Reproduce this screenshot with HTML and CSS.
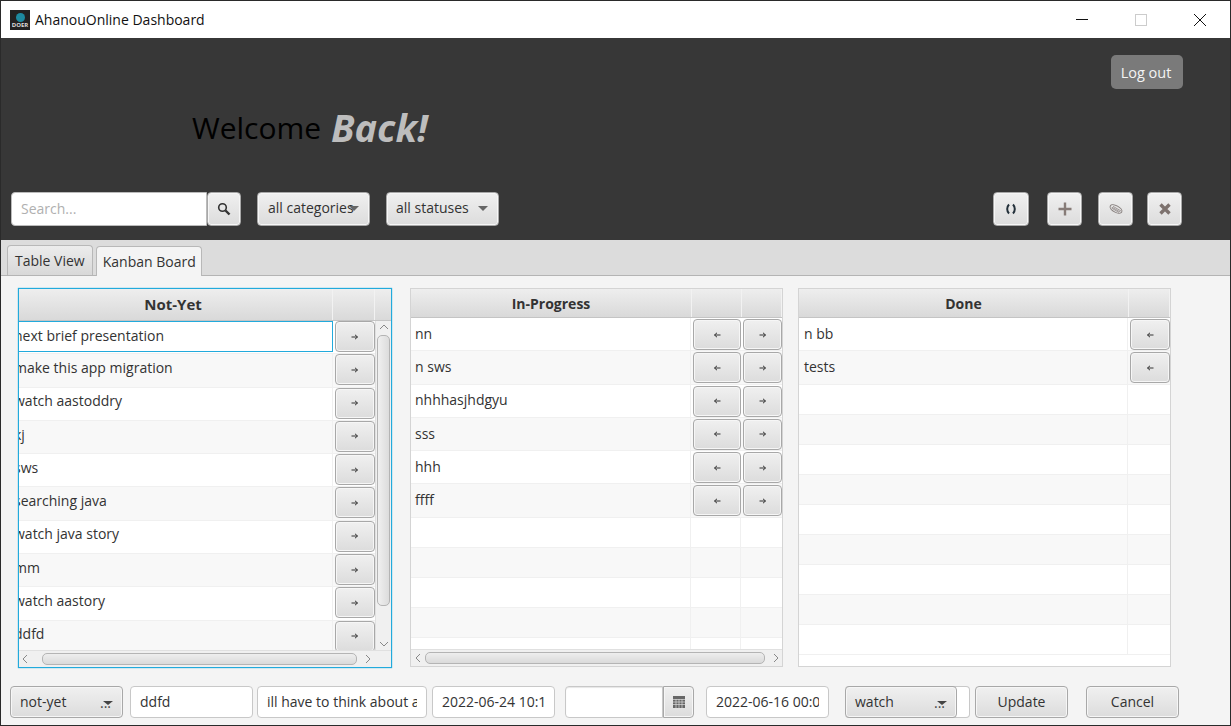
FILE: index.html
```html
<!DOCTYPE html>
<html lang="en">
  <head>
    <meta charset="UTF-8" />
    <meta name="viewport" content="width=device-width, initial-scale=1.0" />
    <title>AhanouOnline Dashboard</title>
    <link rel="stylesheet" href="styles.css">
  </head>
  <body>
    <svg class="defs" width="0" height="0">
      <symbol id="arrow-right" viewBox="0 0 8 8"><path d="M0.500 4h6M4 1.800l2.500 2.200L4 6.200" fill="none" stroke="#333" stroke-width="1"/></symbol>
      <symbol id="arrow-left" viewBox="0 0 8 8"><path d="M7.500 4h-6M4 1.800L1.500 4 4 6.200" fill="none" stroke="#333" stroke-width="1"/></symbol>
    </svg>

    <div class="window">
      <div class="titlebar">
        <div class="app-icon"><span class="app-globe"></span><span class="app-name">DOER</span></div>
        <span class="app-title">AhanouOnline Dashboard</span>
        <div class="window-controls">
          <svg width="12" height="12" viewBox="0 0 12 12"><path d="M0 5.500h12" stroke="#111" stroke-width="1"/></svg>
          <svg width="12" height="12" viewBox="0 0 12 12"><rect x=".5" y=".5" width="11" height="11" fill="none" stroke="#ccc"/></svg>
          <svg width="12" height="12" viewBox="0 0 12 12"><path d="M0 0l12 12M12 0L0 12" stroke="#111" stroke-width="1"/></svg>
        </div>
      </div>

      <header class="header">
        <div class="header-top"><button class="logout">Log out</button></div>
        <h1 class="welcome">Welcome <em>Back!</em></h1>
        <div class="toolbar">
          <div class="search">
            <input class="search-input" placeholder="Search..." />
            <button class="btn search-btn">
              <svg width="14" height="14" viewBox="0 0 14 14"><circle cx="5.500" cy="5.500" r="3.800" fill="none" stroke="#333" stroke-width="1.600"/><path d="M8.500 8.500l4 4" stroke="#333" stroke-width="2.400"/></svg>
            </button>
          </div>
          <div class="btn combo combo-cat">all categories<span class="caret"></span></div>
          <div class="btn combo combo-status">all statuses<span class="caret"></span></div>
          <div class="tools">
            <button class="btn tool tool-refresh">
              <svg width="12" height="12" viewBox="0 0 12 12"><path d="M4 1.500C1.600 4 1.600 8 4 10.500M8 1.500C10.400 4 10.400 8 8 10.500" fill="none" stroke="#23303a" stroke-width="2"/></svg>
            </button>
            <button class="btn tool tool-add">
              <svg width="14" height="14" viewBox="0 0 14 14"><path d="M7 .5v13M.5 7h13" stroke="#877c78" stroke-width="2.400"/></svg>
            </button>
            <button class="btn tool tool-edit">
              <svg width="14" height="12" viewBox="0 0 14 12"><ellipse cx="7" cy="6" rx="6.500" ry="3.200" transform="rotate(28 7 6)" fill="#e4e4e4" stroke="#857d7b" stroke-width="1"/><path d="M2.500 5l7.500 4.500M4 3.300l8 4.700M3 4.200l8 4.700" stroke="#8f8785" stroke-width=".8"/></svg>
            </button>
            <button class="btn tool tool-del">
              <svg width="12" height="12" viewBox="0 0 12 12"><path d="M1.500 1.500l9 9M10.500 1.500l-9 9" stroke="#7d726e" stroke-width="3.400"/></svg>
            </button>
          </div>
        </div>
      </header>

      <div class="tabbar">
        <div class="tab">Table View</div>
        <div class="tab tab-active">Kanban Board</div>
      </div>

      <main class="content">
        <div class="boards">
          <section class="board board-notyet">
            <div class="board-head">
              <div class="head-cell head-name">Not-Yet</div>
              <div class="head-cell head-action"></div>
              <div class="head-cell head-scroll"></div>
            </div>
            <div class="board-middle">
              <div class="rows">
                <div class="row row-selected"><span class="name">next brief presentation</span><button class="btn move"><svg class="arrow"><use href="#arrow-right"/></svg></button></div>
                <div class="row row-odd"><span class="name">make this app migration</span><button class="btn move"><svg class="arrow"><use href="#arrow-right"/></svg></button></div>
                <div class="row"><span class="name">watch aastoddry</span><button class="btn move"><svg class="arrow"><use href="#arrow-right"/></svg></button></div>
                <div class="row row-odd"><span class="name">kj</span><button class="btn move"><svg class="arrow"><use href="#arrow-right"/></svg></button></div>
                <div class="row"><span class="name">sws</span><button class="btn move"><svg class="arrow"><use href="#arrow-right"/></svg></button></div>
                <div class="row row-odd"><span class="name">searching java</span><button class="btn move"><svg class="arrow"><use href="#arrow-right"/></svg></button></div>
                <div class="row"><span class="name">watch java story</span><button class="btn move"><svg class="arrow"><use href="#arrow-right"/></svg></button></div>
                <div class="row row-odd"><span class="name">mm</span><button class="btn move"><svg class="arrow"><use href="#arrow-right"/></svg></button></div>
                <div class="row"><span class="name">watch aastory</span><button class="btn move"><svg class="arrow"><use href="#arrow-right"/></svg></button></div>
                <div class="row row-odd"><span class="name">ddfd</span><button class="btn move"><svg class="arrow"><use href="#arrow-right"/></svg></button></div>
              </div>
              <div class="vscroll">
                <svg class="scroll-arrow" width="10" height="6" viewBox="0 0 10 6"><path d="M1 5l4-4 4 4" fill="none" stroke="#888"/></svg>
                <div class="vthumb"></div>
                <svg class="scroll-arrow" width="10" height="6" viewBox="0 0 10 6"><path d="M1 1l4 4 4-4" fill="none" stroke="#888"/></svg>
              </div>
            </div>
            <div class="hscroll">
              <svg width="6" height="10" viewBox="0 0 6 10"><path d="M5 1L1 5l4 4" fill="none" stroke="#888"/></svg>
              <div class="hthumb"></div>
              <svg width="6" height="10" viewBox="0 0 6 10"><path d="M1 1l4 4-4 4" fill="none" stroke="#888"/></svg>
            </div>
          </section>

          <section class="board board-progress">
            <div class="board-head">
              <div class="head-cell head-name">In-Progress</div>
              <div class="head-cell head-action"></div>
              <div class="head-cell head-action2"></div>
            </div>
            <div class="board-middle">
              <div class="rows">
                <div class="row"><span class="name">nn</span><button class="btn move"><svg class="arrow"><use href="#arrow-left"/></svg></button><button class="btn move"><svg class="arrow"><use href="#arrow-right"/></svg></button></div>
                <div class="row row-odd"><span class="name">n sws</span><button class="btn move"><svg class="arrow"><use href="#arrow-left"/></svg></button><button class="btn move"><svg class="arrow"><use href="#arrow-right"/></svg></button></div>
                <div class="row"><span class="name">nhhhasjhdgyu</span><button class="btn move"><svg class="arrow"><use href="#arrow-left"/></svg></button><button class="btn move"><svg class="arrow"><use href="#arrow-right"/></svg></button></div>
                <div class="row row-odd"><span class="name">sss</span><button class="btn move"><svg class="arrow"><use href="#arrow-left"/></svg></button><button class="btn move"><svg class="arrow"><use href="#arrow-right"/></svg></button></div>
                <div class="row"><span class="name">hhh</span><button class="btn move"><svg class="arrow"><use href="#arrow-left"/></svg></button><button class="btn move"><svg class="arrow"><use href="#arrow-right"/></svg></button></div>
                <div class="row row-odd"><span class="name">ffff</span><button class="btn move"><svg class="arrow"><use href="#arrow-left"/></svg></button><button class="btn move"><svg class="arrow"><use href="#arrow-right"/></svg></button></div>
                <div class="row row-empty"><span class="name"></span><span class="cell-a"></span><span class="cell-b"></span></div>
                <div class="row row-empty row-odd"><span class="name"></span><span class="cell-a"></span><span class="cell-b"></span></div>
                <div class="row row-empty"><span class="name"></span><span class="cell-a"></span><span class="cell-b"></span></div>
                <div class="row row-empty row-odd"><span class="name"></span><span class="cell-a"></span><span class="cell-b"></span></div>
                <div class="row row-empty"><span class="name"></span><span class="cell-a"></span><span class="cell-b"></span></div>
              </div>
            </div>
            <div class="hscroll">
              <svg width="6" height="10" viewBox="0 0 6 10"><path d="M5 1L1 5l4 4" fill="none" stroke="#888"/></svg>
              <div class="hthumb"></div>
              <svg width="6" height="10" viewBox="0 0 6 10"><path d="M1 1l4 4-4 4" fill="none" stroke="#888"/></svg>
            </div>
          </section>

          <section class="board board-done">
            <div class="board-head">
              <div class="head-cell head-name">Done</div>
              <div class="head-cell head-action"></div>
            </div>
            <div class="board-middle">
              <div class="rows">
                <div class="row"><span class="name">n bb</span><button class="btn move"><svg class="arrow"><use href="#arrow-left"/></svg></button></div>
                <div class="row row-odd"><span class="name">tests</span><button class="btn move"><svg class="arrow"><use href="#arrow-left"/></svg></button></div>
                <div class="row row-empty"><span class="name"></span><span class="cell-a"></span></div>
                <div class="row row-empty row-odd"><span class="name"></span><span class="cell-a"></span></div>
                <div class="row row-empty"><span class="name"></span><span class="cell-a"></span></div>
                <div class="row row-empty row-odd"><span class="name"></span><span class="cell-a"></span></div>
                <div class="row row-empty"><span class="name"></span><span class="cell-a"></span></div>
                <div class="row row-empty row-odd"><span class="name"></span><span class="cell-a"></span></div>
                <div class="row row-empty"><span class="name"></span><span class="cell-a"></span></div>
                <div class="row row-empty row-odd"><span class="name"></span><span class="cell-a"></span></div>
                <div class="row row-empty"><span class="name"></span><span class="cell-a"></span></div>
              </div>
            </div>
          </section>
        </div>

        <div class="form">
          <div class="btn combo form-status">not-yet<span class="dots">...</span><span class="caret caret-dark"></span></div>
          <input class="field field-title" value="ddfd" />
          <input class="field field-desc" value="ill have to think about a" />
          <input class="field field-start" value="2022-06-24 10:1" />
          <div class="date-picker">
            <input class="field date-input" />
            <button class="btn date-btn">
              <svg width="12" height="12" viewBox="0 0 12 12"><rect width="12" height="12" fill="#666"/><path d="M0 3.500h12M0 6h12M0 8.500h12M3 3v9M6 3v9M9 3v9" stroke="#ddd" stroke-width=".7"/></svg>
            </button>
          </div>
          <input class="field field-end" value="2022-06-16 00:0" />
          <div class="combo-wrap">
            <div class="btn combo form-type">watch<span class="dots">...</span><span class="caret caret-dark"></span></div>
          </div>
          <button class="btn action action-update">Update</button>
          <button class="btn action action-cancel">Cancel</button>
        </div>
      </main>
    </div>
  </body>
</html>
```

FILE: styles.css
```css
/* General styles */
* {
  box-sizing: border-box;
}

body {
  margin: 0;
  font-family: "Open Sans", "Noto Sans", sans-serif;
  font-size: 14px;
  color: #333;
  overflow: hidden;
}

.defs {
  display: block;
  height: 0;
}

.window {
  width: 1231px;
  height: 726px;
  display: flex;
  flex-direction: column;
  border: 1px solid #2a2a2a;
  background-color: #f4f4f4;
}

/* Title bar */
.titlebar {
  height: 37px;
  flex: none;
  display: flex;
  align-items: center;
  padding-left: 9px;
  background-color: #fff;
  color: #111;
}

.app-icon {
  width: 20px;
  height: 20px;
  display: flex;
  flex-direction: column;
  align-items: center;
  background-color: #222;
  margin-right: 5px;
}

.app-globe {
  width: 9px;
  height: 9px;
  margin-top: 3px;
  border-radius: 50%;
  background-color: #1d8aa0;
}

.app-name {
  font-size: 6px;
  line-height: 7px;
  font-weight: 700;
  color: #ddd;
}

.app-title {
  font-size: 14px;
}

.window-controls {
  margin-left: auto;
  display: flex;
  gap: 47px;
  padding-right: 24px;
}

/* Dark header */
.header {
  height: 202px;
  flex: none;
  display: flex;
  flex-direction: column;
  padding: 17px 48px 14px 10px;
  background-color: #373737;
}

.header-top {
  display: flex;
  justify-content: flex-end;
  margin-right: -1px;
}

.logout {
  width: 72px;
  height: 34px;
  border: none;
  border-radius: 5px;
  padding: 0 2px 0 0;
  background-color: #7a7a7a;
  color: #f4f4f4;
  font: inherit;
  font-size: 14.500px;
}

.welcome {
  margin: 12px 0 0 181px;
  height: 60px;
  font-size: 30px;
  font-weight: 400;
  line-height: 46px;
  color: #000;
}

.welcome em {
  position: relative;
  top: 3px;
  margin-left: 2px;
  font-size: 38px;
  font-weight: 700;
  color: #bdbdbd;
}

.toolbar {
  margin-top: auto;
  display: flex;
  align-items: stretch;
  height: 34px;
}

.btn {
  border: 1px solid #a8a8a8;
  border-radius: 4px;
  background: linear-gradient(#f0f0f0, #dcdcdc);
  box-shadow: inset 0 0 0 1px #f6f6f6;
  font: inherit;
  color: #333;
}

.search {
  display: flex;
  width: 230px;
}

.search-input {
  width: 196px;
  border: 1px solid #bbb;
  border-radius: 4px 0 0 4px;
  padding: 0 9px 2px;
  font: inherit;
  outline: none;
}

.search-input::placeholder {
  color: #b0b0b0;
}

.search-btn {
  width: 34px;
  padding: 0;
  display: flex;
  align-items: center;
  justify-content: center;
}

.combo {
  position: relative;
  display: flex;
  align-items: center;
  padding-left: 10px;
  padding-bottom: 3px;
  white-space: nowrap;
}

.combo-cat {
  width: 113px;
  margin-left: 16px;
}

.combo-status {
  width: 113px;
  margin-left: 16px;
  padding-left: 9px;
}

.caret {
  position: absolute;
  right: 10px;
  top: 50%;
  margin-top: -3px;
  border-left: 5px solid transparent;
  border-right: 5px solid transparent;
  border-top: 5px solid #666;
}

.caret-dark {
  border-top: 4px solid #444;
  right: 9px;
  margin-top: -1px;
}

.tools {
  margin-left: auto;
  display: flex;
}

.tool {
  width: 35px;
  padding: 0;
  display: flex;
  align-items: center;
  justify-content: center;
}

.tool-refresh {
  width: 36px;
}

.tool-add {
  margin-left: 18px;
}

.tool-edit {
  margin-left: 16px;
}

.tool-del {
  margin-left: 14px;
}

/* Tabs */
.tabbar {
  height: 36px;
  flex: none;
  display: flex;
  align-items: flex-end;
  gap: 3px;
  padding-left: 6px;
  background-color: #dcdcdc;
  border-bottom: 1px solid #b4b4b4;
}

.tab {
  height: 30px;
  padding: 0 7px;
  display: flex;
  align-items: center;
  border: 1px solid #b8b8b8;
  border-bottom: none;
  border-radius: 4px 4px 0 0;
  background: linear-gradient(#ececec, #d8d8d8);
  font-size: 14px;
}

.tab-active {
  height: 30px;
  margin-bottom: -1px;
  padding: 0 5px 0 6px;
  background: #f4f4f4;
}

/* Boards */
.content {
  flex: 1;
  display: flex;
  flex-direction: column;
  min-height: 0;
  padding: 12px 0 0;
}

.boards {
  display: flex;
  padding-left: 17px;
  height: 380px;
  flex: none;
}

.board {
  display: flex;
  flex-direction: column;
  background-color: #fff;
  border: 1px solid #d4d4d4;
}

.board-notyet {
  width: 374px;
  border: 1px solid #22aadc;
  box-shadow: 0 0 1px #22aadc;
}

.board-progress {
  width: 373px;
  margin-left: 18px;
  height: 379px;
}

.board-done {
  width: 373px;
  margin-left: 15px;
  height: 379px;
}

.board-head {
  height: 29px;
  flex: none;
  display: flex;
  background-color: #d4d4d4;
  border-bottom: 1px solid #c4c4c4;
}

.board-notyet .board-head {
  height: 32px;
}

.head-cell {
  display: flex;
  align-items: center;
  justify-content: center;
  background: linear-gradient(#eeeeee, #d9d9d9);
  border-right: 1px solid #f2f2f2;
  font-weight: 700;
}

.head-name {
  flex: 1;
  min-width: 0;
}

.board-notyet .head-name {
  padding: 0 5px 2px 0;
  font-size: 15px;
}

.head-action {
  width: 41px;
}

.board-notyet .head-action {
  width: 42px;
}

.head-scroll {
  width: 16px;
  border-right: none;
}

.board-progress .head-action {
  width: 50px;
}

.head-action2 {
  width: 40px;
}

.board-middle {
  flex: 1;
  min-height: 0;
  display: flex;
  overflow: hidden;
}

.rows {
  flex: 1;
  min-width: 0;
  overflow: hidden;
}

.row {
  height: 33.300px;
  display: flex;
  background-color: #fff;
  border-bottom: 1px solid #f0f0f0;
}

.row-odd {
  background-color: #f8f8f8;
}

.row-empty {
  height: 30px;
}

.name {
  flex: 1;
  min-width: 0;
  display: flex;
  align-items: center;
  padding-left: 4px;
  padding-bottom: 2px;
  overflow: hidden;
  white-space: nowrap;
  border-right: 1px solid #f0f0f0;
}

.board-done .name {
  padding-left: 5px;
}

.board-notyet .name {
  padding-left: 0;
  padding-bottom: 6px;
  text-indent: -5px;
}

.board-notyet .row-selected .name {
  height: 31px;
  padding-bottom: 2px;
  border: 1px solid #22aadc;
  border-left: none;
}

.move {
  width: 40px;
  margin: 1px 0 0 2px;
  padding: 0;
  display: flex;
  align-items: center;
  justify-content: center;
  height: 31px;
  flex: none;
}

.board-notyet .move {
  margin-top: 0;
}

.arrow {
  width: 8px;
  height: 8px;
}

.board-progress .move:nth-of-type(1) {
  width: 48px;
}

.board-progress .move:nth-of-type(2) {
  width: 39px;
}

.cell-a {
  width: 42px;
  border-right: 1px solid #f0f0f0;
}

.board-progress .cell-a {
  width: 50px;
}

.cell-b {
  width: 41px;
}

.board-done .cell-a {
  width: 42px;
  border-right: none;
}

/* Scrollbars */
.vscroll {
  width: 16px;
  flex: none;
  display: flex;
  flex-direction: column;
  align-items: center;
  gap: 5px;
  padding: 3px 0;
  background-color: #f0f0f0;
  border-left: 1px solid #e0e0e0;
}

.vthumb {
  flex: 1;
  width: 13px;
  border: 1px solid #b4b4b4;
  border-radius: 5px;
  background: linear-gradient(90deg, #f0f0f0, #dcdcdc);
  margin-bottom: 30px;
}

.scroll-arrow {
  flex: none;
}

.hscroll {
  height: 17px;
  flex: none;
  display: flex;
  align-items: center;
  padding: 0 3px 0 4px;
  background-color: #f0f0f0;
  border-top: 1px solid #e0e0e0;
}

.hthumb {
  flex: 1;
  height: 12px;
  margin: 0 8px 0 4px;
  border: 1px solid #b4b4b4;
  border-radius: 5px;
  background: linear-gradient(#eeeeee, #dadada);
}

.board-notyet .hscroll {
  padding: 0 20px 0 3px;
}

.board-notyet .hthumb {
  margin-left: 14px;
}

/* Edit form */
.form {
  margin-top: 18px;
  display: flex;
  height: 32px;
  padding-left: 9px;
}

.field {
  height: 32px;
  border: 1px solid #c8c8c8;
  border-radius: 4px;
  padding: 0 9px 2px;
  background-color: #fff;
  font: inherit;
  color: #333;
  outline: none;
}

.form-status {
  width: 113px;
  height: 32px;
  padding-left: 9px;
  padding-bottom: 1px;
}

.dots {
  position: absolute;
  right: 11px;
  top: 6px;
  color: #444;
}

.field-title {
  width: 123px;
  margin-left: 7px;
}

.field-desc {
  width: 170px;
  margin-left: 4px;
}

.field-start {
  width: 123px;
  margin-left: 5px;
}

.date-picker {
  width: 129px;
  height: 32px;
  margin-left: 10px;
  display: flex;
}

.date-input {
  flex: 1;
  min-width: 0;
  border-radius: 4px 0 0 4px;
  box-shadow: inset 0 1px 1px #e6e6e6;
}

.date-btn {
  width: 31px;
  padding: 0;
  border-radius: 0 4px 4px 0;
  display: flex;
  align-items: center;
  justify-content: center;
}

.field-end {
  width: 123px;
  margin-left: 12px;
}

.combo-wrap {
  width: 125px;
  height: 32px;
  margin-left: 16px;
  background-color: #fff;
  border: 1px solid #c8c8c8;
  border-left: none;
  border-radius: 4px;
}

.form-type {
  width: 112px;
  height: 32px;
  margin-top: -1px;
  padding-left: 9px;
  padding-bottom: 1px;
}

.action {
  width: 93px;
  height: 32px;
  padding-bottom: 3px;
}

.action-update {
  margin-left: 5px;
}

.action-cancel {
  margin-left: 18px;
}
```
